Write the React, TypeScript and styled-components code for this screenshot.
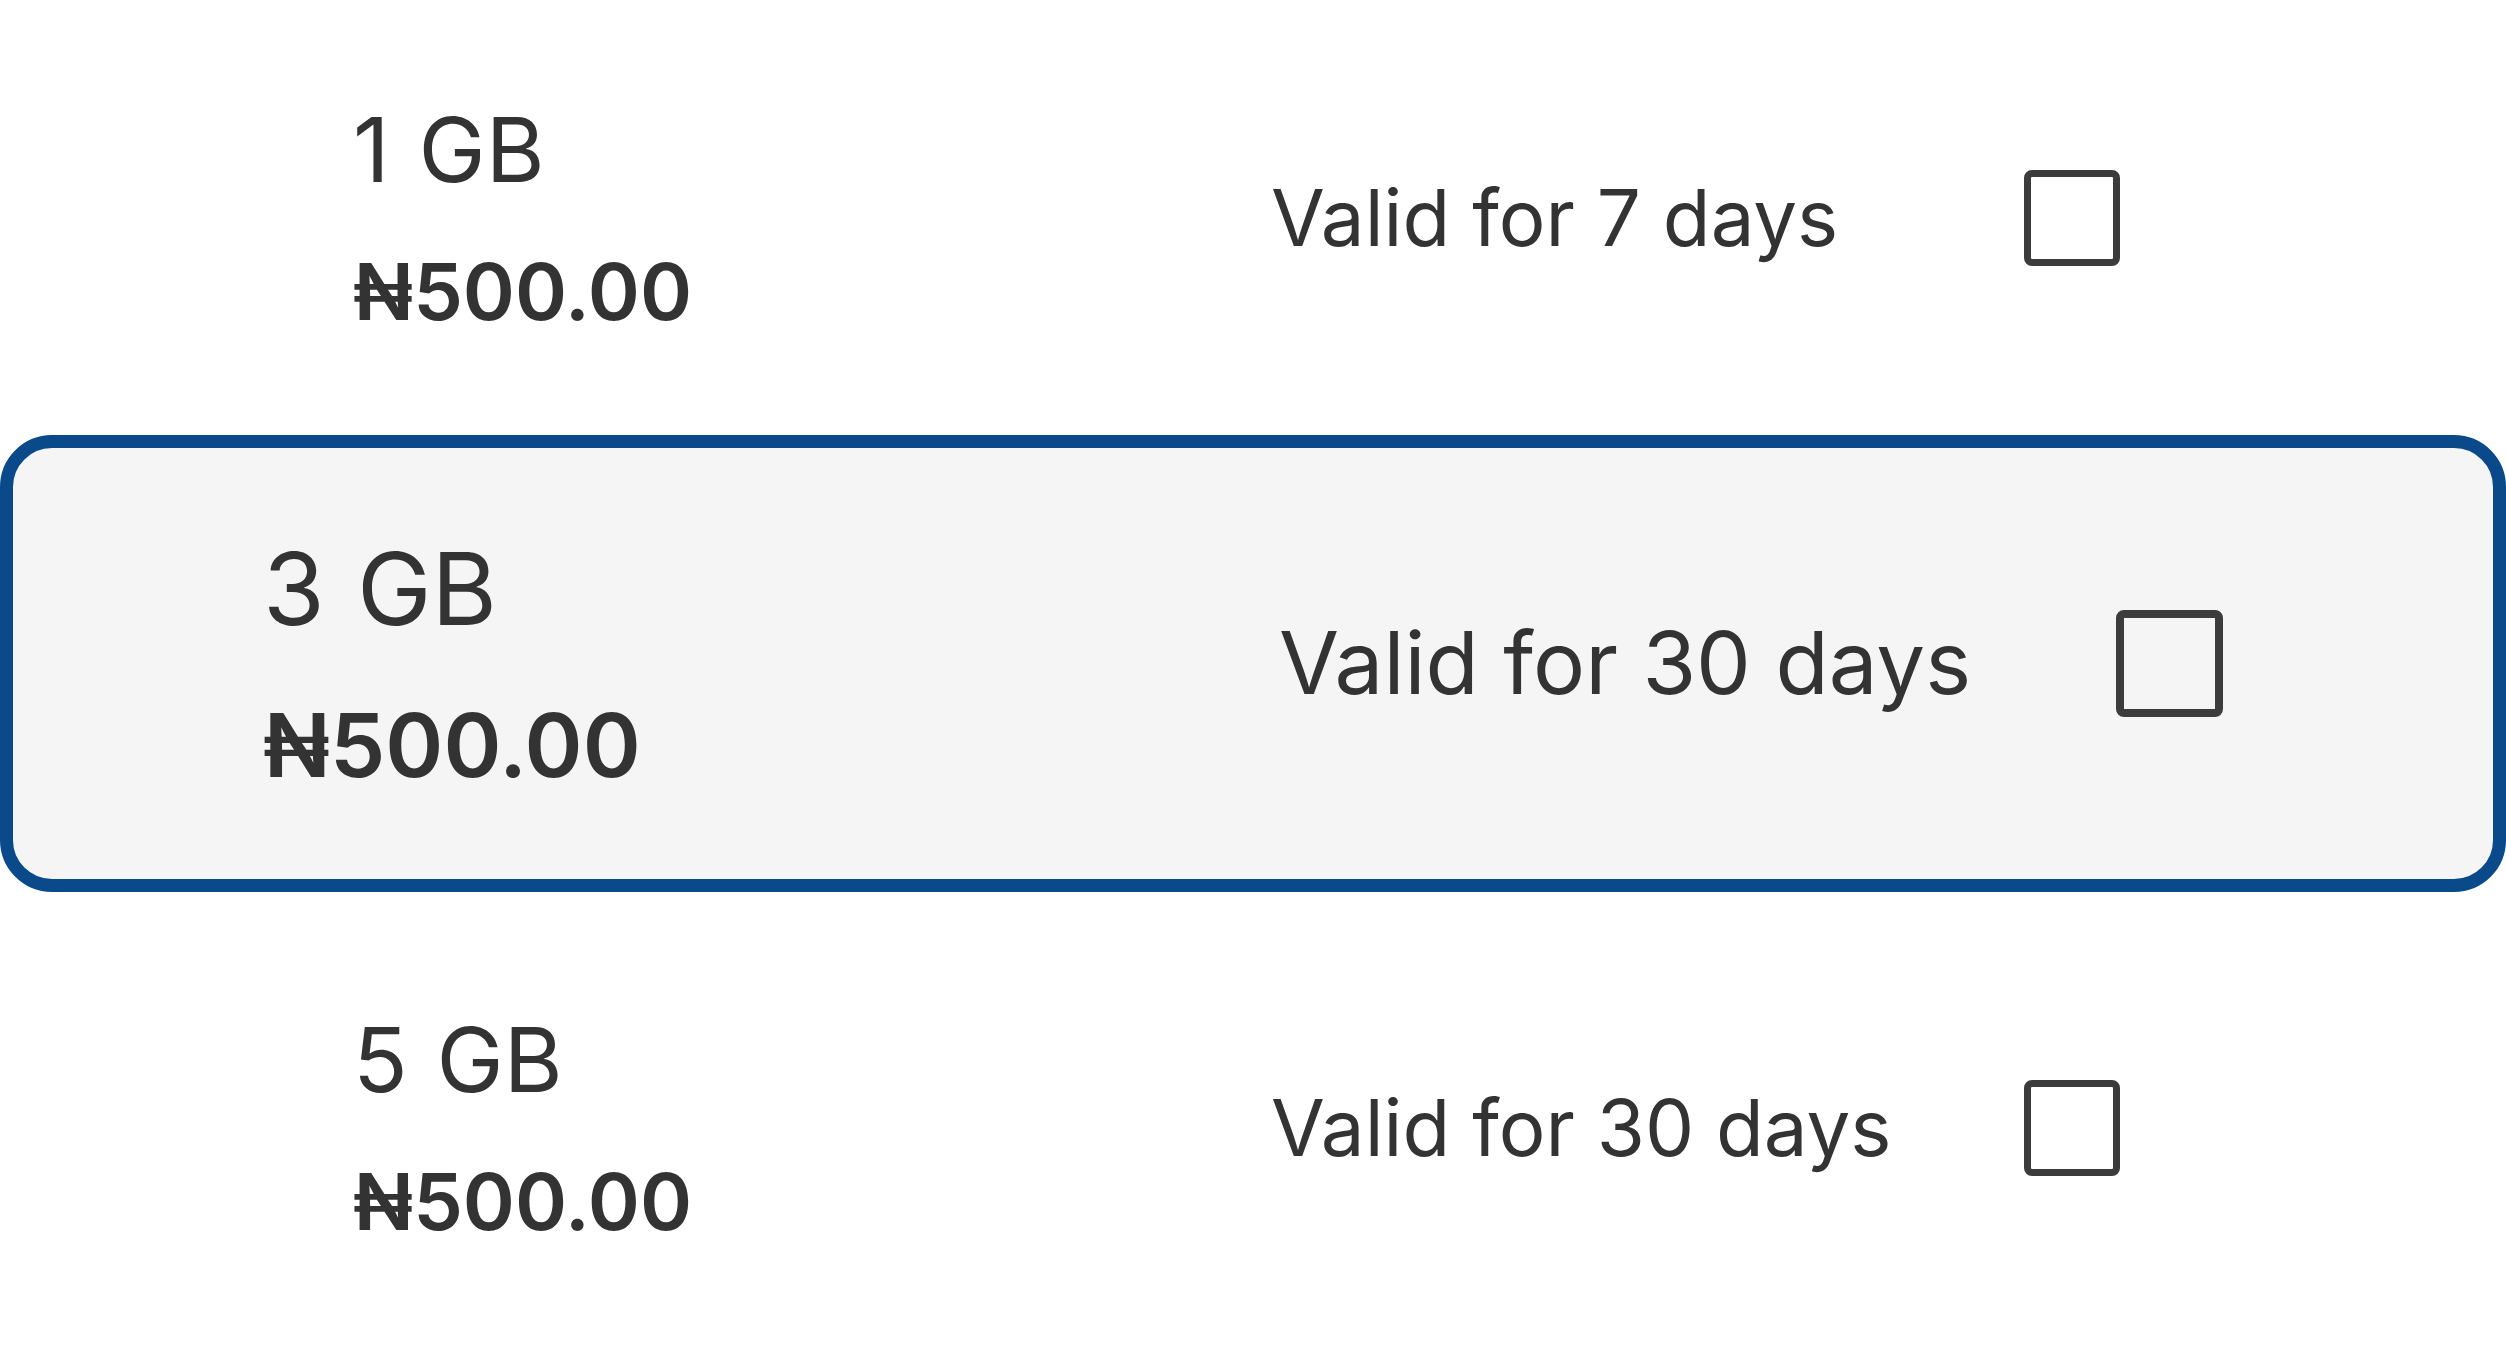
import React, { useState } from 'react';
import styled, { createGlobalStyle, css } from 'styled-components';

const GlobalStyle = createGlobalStyle`
  html, body {
    margin: 0;
    padding: 0;
    background: #ffffff;
    overflow: hidden;
  }
  body {
    font-family: Inter, "Noto Sans", "Liberation Sans", sans-serif;
    color: #333333;
  }
`;

type Plan = {
  id: number;
  size: string;
  price: string;
  validity: string;
};

const plans: Plan[] = [
  { id: 1, size: '1 GB', price: '₦500.00', validity: 'Valid for 7 days' },
  { id: 3, size: '3 GB', price: '₦500.00', validity: 'Valid for 30 days' },
  { id: 5, size: '5 GB', price: '₦500.00', validity: 'Valid for 30 days' },
];

const PlanList = styled.div`
  display: flex;
  flex-direction: column;
  width: 100%;
`;

// selected plan is drawn a bit bigger, with the blue outline
const PlanRow = styled.div<{ $selected?: boolean }>`
  box-sizing: border-box;
  display: grid;
  align-items: center;
  width: 100%;
  height: 435px;
  padding-left: 353px;
  grid-template-columns: 918px 753px 96px;
  cursor: pointer;

  ${({ $selected }) =>
    $selected &&
    css`
      height: 457px;
      margin-bottom: 18px;
      padding-left: 250px;
      grid-template-columns: 1016px 837px 107px;
      background: #f5f5f5;
      border: 13px solid #0a4a8b;
      border-radius: 52px;
    `}
`;

const PlanInfo = styled.div<{ $selected?: boolean }>`
  display: flex;
  flex-direction: column;
  gap: ${({ $selected }) => ($selected ? '44px' : '40px')};
`;

const DataSize = styled.div<{ $selected?: boolean }>`
  font-size: ${({ $selected }) => ($selected ? '100px' : '90px')};
  line-height: 1.2;
  font-weight: 400;
  word-spacing: 0.04em;
`;

const Price = styled.div<{ $selected?: boolean }>`
  font-size: ${({ $selected }) => ($selected ? '88px' : '79px')};
  line-height: 1.2;
  font-weight: 600;
`;

const Validity = styled.div<{ $selected?: boolean }>`
  font-size: ${({ $selected }) => ($selected ? '87px' : '78px')};
  line-height: 1.2;
  font-weight: 400;
  white-space: nowrap;
`;

const CheckBox = styled.span<{ $selected?: boolean }>`
  box-sizing: border-box;
  display: block;
  width: ${({ $selected }) => ($selected ? '107px' : '96px')};
  height: ${({ $selected }) => ($selected ? '107px' : '96px')};
  border: ${({ $selected }) => ($selected ? '8px' : '7.5px')} solid #3c3c3c;
  border-radius: 8px;
  background: transparent;
`;

export default function App() {
  const [selected, setSelected] = useState(3);

  return (
    <>
      <GlobalStyle />
      <PlanList>
        {plans.map((plan) => {
          const active = plan.id === selected;
          return (
            <PlanRow
              key={plan.id}
              $selected={active}
              onClick={() => setSelected(plan.id)}
            >
              <PlanInfo $selected={active}>
                <DataSize $selected={active}>{plan.size}</DataSize>
                <Price $selected={active}>{plan.price}</Price>
              </PlanInfo>
              <Validity $selected={active}>{plan.validity}</Validity>
              <CheckBox $selected={active} />
            </PlanRow>
          );
        })}
      </PlanList>
    </>
  );
}
